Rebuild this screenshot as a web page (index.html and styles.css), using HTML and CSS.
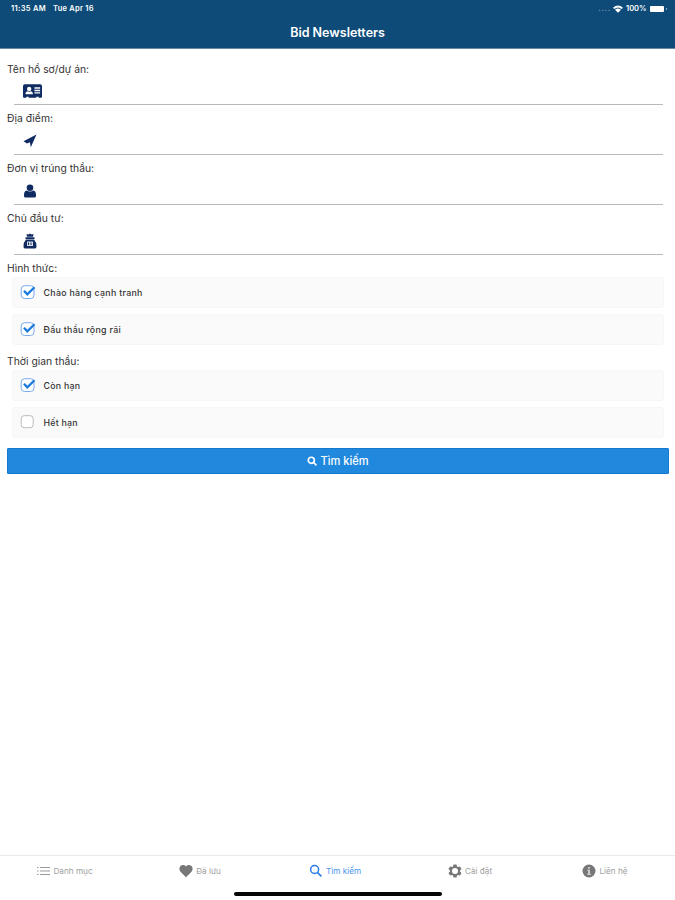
FILE: index.html
```html
<!DOCTYPE html>
<html lang="vi">
<head>
<meta charset="utf-8">
<title>Bid Newsletters</title>
<link rel="stylesheet" href="styles.css">
</head>
<body>
<header class="header">
  <div class="status">
    <span class="time">11:35 AM</span><span class="date">Tue Apr 16</span>
    <span class="dots">....</span>
    <svg class="wifi" viewBox="0 0 20 15"><path d="M0 5Q10-4 20 5L17.500 7.500Q10 1 2.500 7.500ZM4 9Q10 3.500 16 9L10 15Z"/></svg>
    <span class="percent">100%</span>
    <span class="battery"></span><span class="tip"></span>
  </div>
  <h1 class="title"><span>Bid Newsletters</span></h1>
</header>
<main class="form">
  <div class="field">
    <label class="label">Tên hồ sơ/dự án:</label>
    <div class="input"><svg class="card-icon" viewBox="0 0 20 16"><path fill-rule="evenodd" d="M2 1H18Q20 1 20 3V14Q20 15 19 15H16.500V14H14V15H6V14H3.500V15H1Q0 15 0 14V3Q0 1 2 1ZM6.500 3.500A2.300 2.300 0 1 0 6.500 8.100A2.300 2.300 0 1 0 6.500 3.500ZM2.500 11.500H10.500Q10.500 8.500 8.500 8.200Q6.500 9.200 4.500 8.200Q2.500 8.500 2.500 11.500ZM12 4V5.500H18V4ZM12 6.700V8.200H18V6.700ZM12 9.400V10.700H18V9.400Z"/></svg></div>
  </div>
  <div class="field">
    <label class="label">Địa điểm:</label>
    <div class="input"><svg class="icon" viewBox="0 0 14 14"><path d="M13.500.5L7.800 13.300L6.900 8.300L4 9.500L.5 7.200Z"/></svg></div>
  </div>
  <div class="field">
    <label class="label">Đơn vị trúng thầu:</label>
    <div class="input"><svg class="icon" viewBox="0 0 14 14"><circle cx="7" cy="3.700" r="3.300"/><path d="M3.500 6.500Q7 8.500 10.500 6.500Q13 7.300 13 11V12Q13 13.600 11.500 13.600H2.500Q1 13.600 1 12V11Q1 7.300 3.500 6.500Z"/></svg></div>
  </div>
  <div class="field">
    <label class="label">Chủ đầu tư:</label>
    <div class="input"><svg class="icon bag" viewBox="0 0 14 16"><path d="M3.500 1L5.500 1.500L7 .5L8.500 1.500L10.500 1L10 3.700H4ZM2.500 4.300H11.500V6H2.500ZM3 6.500H11Q13.500 9 13.500 13.500Q13.500 15.500 12 15.500H2Q.5 15.500 .5 13.500Q.5 9 3 6.500Z"/><path class="mark" d="M4 8.500H10V13H4Z"/><path d="M5.500 9.500V12M8 9.500V12" stroke="#102b62" stroke-width="1"/></svg></div>
  </div>
  <section class="group">
    <h2 class="label">Hình thức:</h2>
    <div class="option spaced"><svg class="check" viewBox="0 0 16 16"><rect class="box on" x="1.200" y="1.700" width="12.800" height="12.800" rx="3.500"/><path class="tick" d="M4 6.800L7.300 10.300L14.500 3.300"/></svg><span>Chào hàng cạnh tranh</span></div>
    <div class="option spaced"><svg class="check" viewBox="0 0 16 16"><rect class="box on" x="1.200" y="1.700" width="12.800" height="12.800" rx="3.500"/><path class="tick" d="M4 6.800L7.300 10.300L14.500 3.300"/></svg><span>Đấu thầu rộng rãi</span></div>
  </section>
  <section class="group">
    <h2 class="label">Thời gian thầu:</h2>
    <div class="option"><svg class="check" viewBox="0 0 16 16"><rect class="box on" x="1.200" y="1.700" width="12.800" height="12.800" rx="3.500"/><path class="tick" d="M4 6.800L7.300 10.300L14.500 3.300"/></svg><span>Còn hạn</span></div>
    <div class="option"><svg class="check" viewBox="0 0 16 16"><rect class="box" x="1.200" y="1.700" width="12" height="12" rx="3"/></svg><span>Hết hạn</span></div>
  </section>
  <button class="submit"><svg viewBox="0 0 12 12"><circle cx="4.700" cy="4.700" r="3.300"/><path d="M7.300 7.300L10.300 10.300"/></svg><span>Tìm kiếm</span></button>
</main>
<footer class="footer">
  <nav class="tabs">
    <a class="tab"><svg class="list" viewBox="0 0 13 12"><path d="M0 2.500H1.500M3 2.500H13M0 6H1.500M3 6H13M0 9.500H1.500M3 9.500H13"/></svg><span>Danh mục</span></a>
    <a class="tab"><svg viewBox="0 0 14 14"><path d="M7 13.300L1.500 7.700C-2 3.500 3.500-1.500 7 2.500C10.500-1.500 16 3.500 12.500 7.700Z"/></svg><span>Đã lưu</span></a>
    <a class="tab active"><svg class="search" viewBox="0 0 14 14"><circle cx="5.600" cy="5.500" r="4"/><path d="M8.600 8.600L12.400 12.400"/></svg><span>Tìm kiếm</span></a>
    <a class="tab"><svg viewBox="0 0 14 14"><path fill-rule="evenodd" d="M5.500.5H8.500L9 2.500L10 3.100L12 2.500L13.500 5L12 6.400V7.600L13.500 9L12 11.500L10 10.900L9 11.500L8.500 13.500H5.500L5 11.500L4 10.900L2 11.500L.5 9L2 7.600V6.400L.5 5L2 2.500L4 3.100L5 2.500ZM7 4A3 3 0 1 0 7 10A3 3 0 1 0 7 4Z"/></svg><span>Cài đặt</span></a>
    <a class="tab"><svg class="info" viewBox="0 0 14 14"><circle cx="7" cy="7" r="6.500"/><path d="M6 3H8V4.800H6ZM5.200 5.800H8V9.800H9V11H5.200V9.800H6V7H5.200Z"/></svg><span>Liên hệ</span></a>
  </nav>
  <div class="home"></div>
</footer>
</body>
</html>
```
FILE: styles.css
```css
* { box-sizing: border-box; }
body {
  margin: 0;
  height: 900px;
  display: flex;
  flex-direction: column;
  background: #fff;
  color: #333;
  font-family: Inter, "Noto Sans", sans-serif;
  white-space: nowrap;
}
svg { display: block; flex: none; }
.header {
  height: 49px;
  background: #0e4b78;
  border-bottom: 1px solid #6b8bab;
  color: #fff;
}
.status {
  height: 17px;
  padding: 0 8px 0 11px;
  display: flex;
  align-items: center;
  font-size: 7.5px;
  font-weight: 600;
}
.time { width: 42px; letter-spacing: .3px; }
.date { letter-spacing: .25px; }
.dots { margin-left: auto; color: #6f93b3; letter-spacing: .8px; }
.wifi { width: 10px; height: 8px; margin: 0 3px 0 2px; fill: #fff; }
.percent { width: 22px; }
.battery { width: 14px; height: 6px; margin-left: 2px; border-radius: 1px; background: #fff; }
.tip { width: 1px; height: 2px; margin-left: 2px; background: #8faac2; }
.title {
  margin: 0;
  height: 31px;
  display: flex;
  align-items: center;
  justify-content: center;
  font-size: 12.5px;
  font-weight: 600;
}
.form { flex: 1; padding: 6.5px 6px 0 7px; }
.field { height: 49.75px; display: flex; flex-direction: column; }
.label {
  display: block;
  margin: 0;
  height: 14px;
  font-size: 10.35px;
  font-weight: 400;
  line-height: 14px;
}
.field .label { margin-top: 6px; }
.input {
  flex: 1;
  margin: 0 6px 0 7px;
  padding: 3px 0 0 8.5px;
  display: flex;
  align-items: center;
  border-bottom: 1px solid #b7bbbf;
}
.card-icon { width: 19px; height: 16px; fill: #102b62; }
.icon { width: 14px; height: 14px; fill: #102b62; }
.bag { height: 16px; }
.mark { fill: #d5dce8; }
.group { display: flex; flex-direction: column; gap: 5.5px; }
.group .label { margin-bottom: -3.5px; }
.group:first-of-type { margin-top: 6px; }
.group + .group { margin-top: 8.5px; }
.option {
  height: 31.5px;
  margin: 0 5px;
  padding-left: 6.5px;
  display: flex;
  align-items: center;
  gap: 8px;
  border: 1px solid #f6f6f6;
  border-radius: 3px;
  background: #fafafa;
  font-size: 8.8px;
  font-weight: 500;
  letter-spacing: .25px;
}
.spaced { letter-spacing: .32px; }
.check { width: 16px; height: 16px; fill: none; }
.box { stroke: #bbb; stroke-width: 1; fill: #fff; }
.on { stroke: #79aae9; }
.tick { stroke: #1a7bdc; stroke-width: 2.3; }
.submit {
  width: 100%;
  height: 26px;
  margin-top: 10px;
  padding: 0;
  border: 1px solid #1479cf;
  border-radius: 1px;
  background: #2088dd;
  color: #fff;
  display: flex;
  align-items: center;
  justify-content: center;
  gap: 2px;
  font: 500 11.1px Inter, "Noto Sans", sans-serif;
}
.submit svg { width: 11px; height: 11px; fill: none; stroke: #fff; stroke-width: 1.8; }
.footer { height: 45px; border-top: 1px solid #eaeaea; }
.tabs { height: 30px; display: flex; }
.tab {
  flex: 1;
  display: flex;
  align-items: center;
  justify-content: center;
  gap: 3px;
  padding-right: 5px;
  color: #a0a0a0;
  font-size: 8.2px;
}
.tab svg { width: 14px; height: 14px; fill: #777; }
.tab .list { width: 13px; height: 12px; stroke: #999; stroke-width: 1; }
.tab.active { color: #4c94f1; }
.tab .search { fill: none; stroke: #2878ed; stroke-width: 1.5; }
.tab .info path { fill: #ccc; }
.home { width: 208px; height: 4px; margin: 6px auto 0; border-radius: 2px; background: #050505; }
```
